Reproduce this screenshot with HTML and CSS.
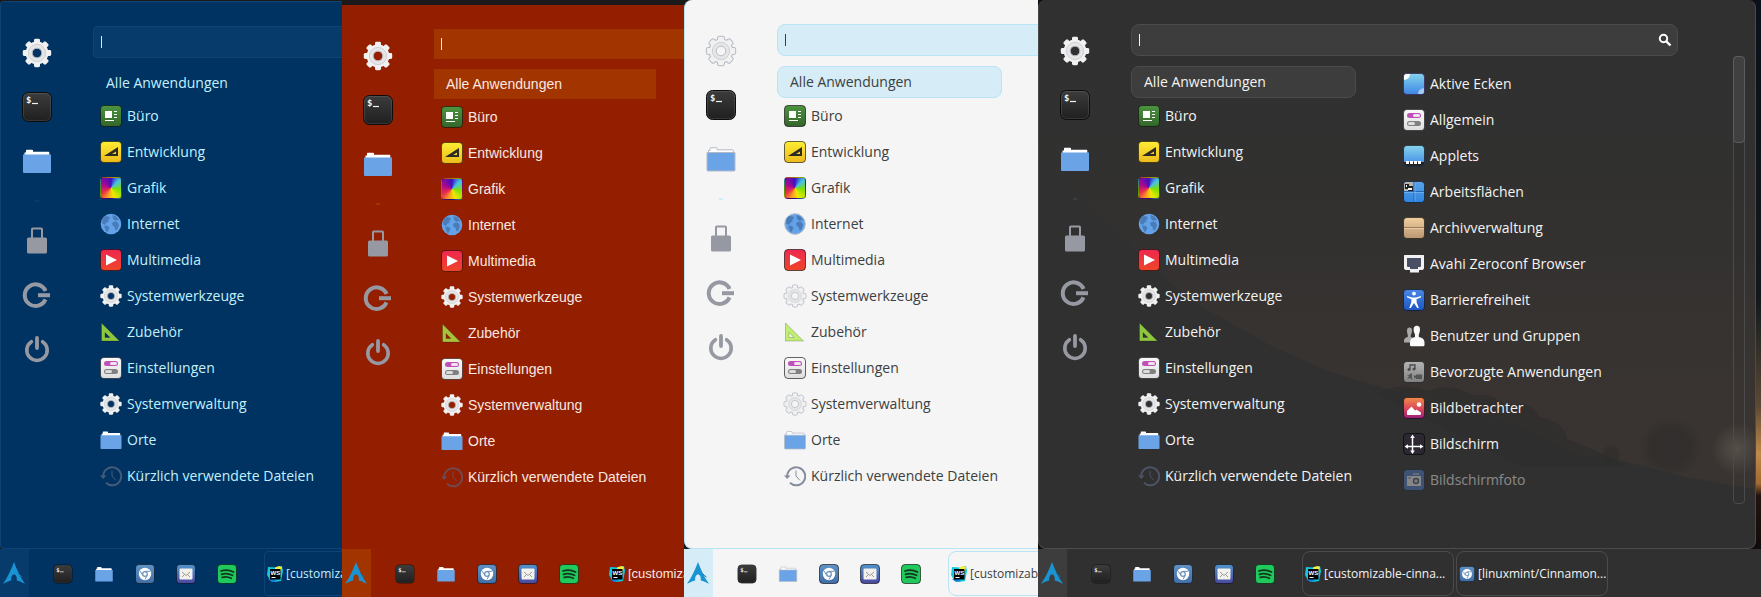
FILE: index.html
```html
<!DOCTYPE html>
<html lang="de">
<head>
<meta charset="utf-8">
<title>Anwendungsmenü – Themen</title>
<link rel="stylesheet" href="styles.css">
</head>
<body>
<svg class="gradients" aria-hidden="true">
  <defs>
    <linearGradient id="g-green" x2="0" y2="1"><stop stop-color="#4d9440"/><stop offset="1" stop-color="#33652a"/></linearGradient>
    <linearGradient id="g-yellow" x2="0" y2="1"><stop stop-color="#fdee34"/><stop offset="1" stop-color="#ecba1c"/></linearGradient>
    <linearGradient id="g-red" x2="0" y2="1"><stop stop-color="#ee2850"/><stop offset="1" stop-color="#ee4528"/></linearGradient>
    <linearGradient id="g-dark" x2="0" y2="1"><stop stop-color="#3c3c3c"/><stop offset="1" stop-color="#1f1f1f"/></linearGradient>
    <linearGradient id="g-white" x2="0" y2="1"><stop stop-color="#fafafa"/><stop offset="1" stop-color="#dedede"/></linearGradient>
    <linearGradient id="g-sky" x2="0" y2="1"><stop stop-color="#86d4ee"/><stop offset="1" stop-color="#3c86e4"/></linearGradient>
    <linearGradient id="g-blue" x2="0" y2="1"><stop stop-color="#5aa5e8"/><stop offset="1" stop-color="#2f84e2"/></linearGradient>
    <linearGradient id="g-tan" x2="0" y2="1"><stop stop-color="#f2cf9e"/><stop offset="1" stop-color="#b99773"/></linearGradient>
    <linearGradient id="g-access" x2="0" y2="1"><stop stop-color="#4b86e6"/><stop offset="1" stop-color="#1c57c4"/></linearGradient>
    <linearGradient id="g-grey" x2="0" y2="1"><stop stop-color="#b5b5b5"/><stop offset="1" stop-color="#808080"/></linearGradient>
    <linearGradient id="g-sunset" x2="0" y2="1"><stop stop-color="#f28b4c"/><stop offset=".55" stop-color="#d9455a"/><stop offset="1" stop-color="#96207c"/></linearGradient>
    <linearGradient id="g-steel" x2="0" y2="1"><stop stop-color="#6093c6"/><stop offset="1" stop-color="#3f6ea6"/></linearGradient>
    <linearGradient id="g-mail" x2="0" y2="1"><stop stop-color="#5094cc"/><stop offset="1" stop-color="#4a48a0"/></linearGradient>
    <linearGradient id="g-haze" x2="0" y2="1"><stop stop-color="#5a4234" stop-opacity="0"/><stop offset=".4" stop-color="#5a4234" stop-opacity=".04"/><stop offset=".85" stop-color="#5a4234" stop-opacity=".22"/></linearGradient>
    <radialGradient id="g-sun"><stop stop-color="#8a8478" stop-opacity=".35"/><stop offset="1" stop-color="#8a8478" stop-opacity="0"/></radialGradient>
    <radialGradient id="g-tree"><stop offset=".6" stop-color="#2c2b2a" stop-opacity=".6"/><stop offset="1" stop-color="#2c2b2a" stop-opacity="0"/></radialGradient>
  </defs>
</svg>
<svg class="symbols" aria-hidden="true">
  <defs>
    <g id="gear-shape">
      <circle cx="16" cy="16" r="11.4"/>
      <rect x="13" y="1.8" width="6" height="28.4" rx="1.4"/>
      <rect x="13" y="1.8" width="6" height="28.4" rx="1.4" transform="rotate(45 16 16)"/>
      <rect x="13" y="1.8" width="6" height="28.4" rx="1.4" transform="rotate(90 16 16)"/>
      <rect x="13" y="1.8" width="6" height="28.4" rx="1.4" transform="rotate(135 16 16)"/>
    </g>
  </defs>
  <symbol id="gear" viewBox="0 0 32 32">
    <use href="#gear-shape" class="gear-edge"/>
    <use href="#gear-shape" fill="#f1f1f2"/>
    <circle cx="16" cy="16" r="8.6" fill="#e6e6e7" stroke="#cdd0d4"/>
    <circle cx="16" cy="16" r="4.8" class="gear-hole"/>
  </symbol>
  <symbol id="terminal" viewBox="0 0 32 32">
    <rect x="1.5" y="1.5" width="29" height="29" rx="6" fill="url(#g-dark)" stroke="#0c0c0c"/>
    <rect x="2.5" y="2.5" width="27" height="27" rx="5" fill="none" stroke="#fff" stroke-opacity=".1"/>
    <text x="5" y="12" class="prompt">$</text>
    <path d="M11 12.5h6" stroke="#f2f2f2" stroke-width="1.2"/>
  </symbol>
  <symbol id="folder" viewBox="0 0 32 32">
    <path d="M3.500 12V7.500h1.500V5.500q0-.8.8-.8h5.400q.8 0 .8.8v1.300h15.500q.8 0 .8.8V12z" fill="#fff" class="edge"/>
    <path d="M2 9.500h28v17.500q0 1-1 1H3q-1 0-1-1z" fill="#6aa3e6" class="edge"/>
  </symbol>
  <symbol id="lock" viewBox="0 0 32 32">
    <path d="M11 13V4.300q0-.8.8-.8h8.400q.8 0 .8.8V13" fill="none" stroke="#9699a2" stroke-width="2"/>
    <rect x="6" y="12.500" width="20" height="16" rx="1.500" fill="#9699a2"/>
  </symbol>
  <symbol id="logout" viewBox="0 0 32 32">
    <path d="M24.500 12A10.800 10.800 0 1 0 24.500 20.400" fill="none" stroke="#9699a2" stroke-width="4"/>
    <path d="M17 16.200h12" stroke="#9699a2" stroke-width="4"/>
  </symbol>
  <symbol id="power" viewBox="0 0 32 32">
    <path d="M10.400 8.700A10.200 10.200 0 1 0 21.600 8.700" fill="none" stroke="#9699a2" stroke-width="3.600" stroke-linecap="round"/>
    <path d="M16 5v10" stroke="#9699a2" stroke-width="3.800" stroke-linecap="round"/>
  </symbol>
  <symbol id="office" viewBox="0 0 22 22">
    <rect x=".5" y=".5" width="21" height="21" rx="3.500" fill="url(#g-green)" class="rim"/>
    <path d="M5 6h7v7H5zM14 6h3v1h-3zM14 9h3v1h-3zM14 12h3v1h-3zM5 15h9v1H5z" fill="#fff"/>
  </symbol>
  <symbol id="dev" viewBox="0 0 22 22">
    <rect x=".5" y=".5" width="21" height="21" rx="3.500" fill="url(#g-yellow)" class="rim"/>
    <path fill-rule="evenodd" d="M4 15 18 6v9zM12 13h4v-2.600z" fill="#2c2a25"/>
  </symbol>
  <symbol id="globe" viewBox="0 0 22 22">
    <circle cx="11" cy="11" r="10.300" fill="#63a2e8" class="edge"/>
    <path d="M2.500 5.500 5 3l4 .5 1 2L8 7l1 1.500-2.500 1L5 12l-3-1.500zM4 13l3-.5 2.500 2-1 2.500L7 19.500 5.500 17zM12.500 2l4 1.500 3 4-2-.5-2 1-2.500-2zM12 10l2.500-1.500 3 .5 1.500 3-1.500 4.500-2 1-1-3.500-2-1.500z" fill="#4a7db8"/>
  </symbol>
  <symbol id="media" viewBox="0 0 22 22">
    <rect x=".5" y=".5" width="21" height="21" rx="3.500" fill="url(#g-red)" class="rim"/>
    <path d="M6 5.500 17 11 6 16.500z" fill="#fff"/>
  </symbol>
  <symbol id="triangle" viewBox="0 0 22 22">
    <path fill-rule="evenodd" d="M1.500 2 19.500 20h-18zM5 11.500V16.500h5z" class="ruler"/>
  </symbol>
  <symbol id="settings" viewBox="0 0 22 22">
    <rect x=".5" y=".5" width="21" height="21" rx="3.500" fill="url(#g-white)" class="rim"/>
    <rect x="4" y="4" width="14" height="5" rx="2.500" fill="#bf50b8"/>
    <rect x="10" y="5" width="7" height="3" rx="1.500" fill="#f2e2f0"/>
    <rect x="4" y="12" width="14" height="5" rx="2.500" fill="#808080"/>
    <rect x="5" y="13" width="7" height="3" rx="1.500" fill="#dcdcdc"/>
  </symbol>
  <symbol id="history" viewBox="0 0 22 22">
    <path d="M3.200 11A9 9 0 1 1 6 17.800" fill="none" class="hist"/>
    <path d="M0 10.500h6.400L3.200 14z" class="hist-tip"/>
    <path d="M12 5.500V11l3.800 4.300" fill="none" class="hist-hand"/>
  </symbol>
  <symbol id="corners" viewBox="0 0 22 22">
    <rect x=".5" y=".5" width="21" height="21" rx="3.500" fill="url(#g-sky)" stroke="#3a2258" stroke-opacity=".7"/>
    <path d="M1 7V3.500Q1 1 3.500 1H7Q7 6 1 7z" fill="#fff"/><path d="M21 15v3.500q0 2.500-2.500 2.500H15q0-5 6-6z" fill="#a7c8f4"/>
  </symbol>
  <symbol id="applets" viewBox="0 0 22 22">
    <rect x=".5" y=".5" width="21" height="21" rx="3.500" fill="url(#g-sky)" class="rim"/>
    <path d="M1 17h20v1.500q0 2.500-2.500 2.500h-15Q1 21 1 18.500z" fill="#222"/>
    <path d="M3 16h3v3H3zM7 16h3v3H7zM11 16h3v3h-3zM15 16h3v3h-3z" fill="#fff"/>
  </symbol>
  <symbol id="desks" viewBox="0 0 22 22">
    <rect x=".5" y=".5" width="21" height="21" rx="3.500" fill="url(#g-blue)" class="rim"/>
    <path d="M1 10V3.500Q1 1 3.500 1H10v9z" fill="#b4b4b4"/>
    <path d="M11 1v20M1 10.500h20" stroke="#2467b4" stroke-width="1"/>
    <path d="M12 1.500v19M1 11.500h20" stroke="#86bdf0" stroke-width=".6"/>
    <path d="M2 3h4v5H2zM5 5h5v5H5z" fill="#202020"/><path d="M5 7h4v2H5zM3 4h1v2H3z" fill="#fff"/>
  </symbol>
  <symbol id="archive" viewBox="0 0 22 22">
    <rect x=".5" y=".5" width="21" height="21" rx="3.500" fill="url(#g-tan)" class="rim"/>
    <path d="M1 10.500h20" stroke="#9c7a58"/><path d="M1 11.500h20" stroke="#e6cba6"/>
  </symbol>
  <symbol id="avahi" viewBox="0 0 22 22">
    <path d="M1.500 2h19q.5 0 .5.500V15q0 2-2 2h-3v2.500h-9V17H3q-2 0-2-2V2.500Q1 2 1.500 2z" fill="#f2f2f4"/>
    <path d="M4 5h14v8q0 1-1 1h-2v2H7v-2H5q-1 0-1-1z" fill="#4a4f66"/>
  </symbol>
  <symbol id="access" viewBox="0 0 22 22">
    <rect x=".5" y=".5" width="21" height="21" rx="3.500" fill="url(#g-access)" class="rim"/>
    <circle cx="11" cy="4.600" r="1.900" fill="#fff"/>
    <path d="M4 7l5 1.500h4L18 7v1.200l-4.500 2 .2 3.300L15.800 19h-1.500L11 14l-3.300 5H6.200l2.100-5.500.2-3.300-4.500-2z" fill="#fff"/>
  </symbol>
  <symbol id="users" viewBox="0 0 22 22">
    <path d="M6.500 2.500q2.500 0 2.500 3T7.800 10v2q3 .8 3 4v1.500H1V16q0-3.500 3.800-4v-2Q4 8.500 4 5.500t2.500-3z" fill="#a9a9a9"/>
    <path d="M13.800.8q3.200 0 3.200 3.700 0 3.200-1.200 5V12q5.700.8 5.700 5.500V20q0 1.200-1.300 1.200H8.300Q7 21.200 7 20v-2.500Q7 12.800 12 12V9.500Q10.600 7.700 10.600 4.500q0-3.700 3.200-3.700z" fill="#fafafa"/>
  </symbol>
  <symbol id="preferred" viewBox="0 0 22 22">
    <rect x=".5" y=".5" width="21" height="21" rx="3.500" fill="url(#g-grey)" class="rim"/>
    <path d="M7 8.500V4h5v4" fill="none" stroke="#4c4c4c" stroke-width="1.300"/><circle cx="6" cy="8.500" r="1.500" fill="#4c4c4c"/><circle cx="11" cy="8" r="1.500" fill="#4c4c4c"/>
    <path d="M9 12v7l-2-2-3 1 2-3H4zM11 14l2 1v-1.500h6v4.500h-6v-1.500l-2 1z" fill="#555"/>
  </symbol>
  <symbol id="images" viewBox="0 0 22 22">
    <rect x=".5" y=".5" width="21" height="21" rx="3.500" fill="url(#g-sunset)" class="rim"/>
    <circle cx="16" cy="7.500" r="2.300" fill="#fff"/><path d="M4 17.500V14l4.500-4.500 3.500 4 1.500-1 4.500 3v1q0 1.500-1.500 1.500h-11Q4 18 4 17.500z" fill="#fff"/>
  </symbol>
  <symbol id="display" viewBox="0 0 22 22">
    <rect x=".5" y=".5" width="21" height="21" rx="3.500" fill="#2d2734" stroke="#111"/>
    <path d="M9.500 4v14M4 13.500h14" stroke="#fff" stroke-width="1.500"/>
    <path d="M9.500 1.500 11.800 5H7.200zM9.500 21l2.300-3.500H7.200zM1.500 13.500 5 11.200v4.600zM20.500 13.500 17 11.200v4.600z" fill="#fff"/>
  </symbol>
  <symbol id="camera" viewBox="0 0 22 22">
    <rect x=".5" y=".5" width="21" height="21" rx="3.500" fill="#4f7cc8" class="rim"/>
    <path d="M10 4.500h6v1h-6zM4 7h14v10H4z" fill="#eee"/><circle cx="13" cy="12" r="3.200" fill="#4a566a"/><circle cx="13" cy="12" r="1.700" fill="#ddd"/><path d="M5.500 8.500h2v1h-2z" fill="#4a566a"/>
  </symbol>
  <symbol id="arch" viewBox="0 0 22 22">
    <path d="M11 0C8.500 6.500 5 15 0 21.800c3.300-1.600 5.500-2.700 8.200-3.300-.3-3.500.8-6 2.800-6s3.100 2.500 2.800 6c2.700.6 4.900 1.700 8.200 3.300C17 15 13.500 6.500 11 0z" fill="#1a93d2"/>
    <path d="M15.500 11.500q1.500 2 4 3.500" stroke="#0f6fa6" fill="none"/>
  </symbol>
  <symbol id="chromium" viewBox="0 0 20 20">
    <rect x=".5" y=".5" width="19" height="19" rx="3.500" fill="url(#g-steel)" class="rim"/>
    <circle cx="10" cy="10" r="6.200" fill="#fff"/><circle cx="10" cy="10" r="2.300" fill="none" stroke="#6a90ba" stroke-width="1.200"/>
    <path d="M10 7.300h5M7.700 11.300 5.300 7.200M12.300 11.300 10 15.500" stroke="#6a90ba" fill="none"/>
  </symbol>
  <symbol id="mail" viewBox="0 0 20 20">
    <rect x=".5" y=".5" width="19" height="19" rx="3.500" fill="url(#g-mail)" class="rim"/>
    <rect x="3.500" y="4.500" width="13" height="11" rx="1" fill="#f3f1ec"/>
    <path d="M6 8l4 3.500L14 8M6 13l2.600-2.600M14 13l-2.600-2.600" stroke="#9c9c98" fill="none"/>
  </symbol>
  <symbol id="spotify" viewBox="0 0 20 20">
    <rect x=".5" y=".5" width="19" height="19" rx="3.500" fill="#1fc95b" class="rim"/>
    <path d="M4 7q6.500-2 12.500 1M4.500 10.300q5.500-1.700 11 1M5.200 13.300q4.800-1.300 9 1" stroke="#14361f" stroke-width="1.800" fill="none" stroke-linecap="round"/>
  </symbol>
  <symbol id="webstorm" viewBox="0 0 16 16">
    <path d="M1 1l8 .5L15 0l1 5-2 10-6 1-5-2L0 9z" fill="#12c9dc"/><path d="M8 1.500 12 0l3 1-1 4H8z" fill="#f2ee3c"/><path d="M1 13l4 3 5-1-4-3z" fill="#147fe0"/>
    <rect x="3" y="3" width="10.500" height="10.500" fill="#000"/><text x="3.500" y="9" class="ws">WS</text><path d="M4.500 11.500h4" stroke="#fff"/>
  </symbol>
  <symbol id="search" viewBox="0 0 14 14">
    <circle cx="5.500" cy="5.500" r="3.700" fill="none" stroke="#fff" stroke-width="2"/><path d="M8.300 8.300 12.500 12.500" stroke="#fff" stroke-width="2.400"/>
  </symbol>
</svg>

<main class="themes">
  <section class="panel blue">
    <div class="menu">
      <nav class="sidebar">
        <button aria-label="Systemeinstellungen"><svg><use href="#gear"/></svg></button>
        <button aria-label="Terminal"><svg><use href="#terminal"/></svg></button>
        <button aria-label="Dateien"><svg><use href="#folder"/></svg></button>
        <hr>
        <button aria-label="Sperren"><svg><use href="#lock"/></svg></button>
        <button aria-label="Abmelden"><svg><use href="#logout"/></svg></button>
        <button aria-label="Ausschalten"><svg><use href="#power"/></svg></button>
      </nav>
      <div class="content">
        <label class="search"><span class="caret"></span><input type="text" aria-label="Suche"></label>
        <div class="lists">
          <div class="categories">
            <button class="all">Alle Anwendungen</button>
            <button><svg><use href="#office"/></svg>Büro</button>
            <button><svg><use href="#dev"/></svg>Entwicklung</button>
            <button><span class="wheel"></span>Grafik</button>
            <button><svg><use href="#globe"/></svg>Internet</button>
            <button><svg><use href="#media"/></svg>Multimedia</button>
            <button><svg class="wide"><use href="#gear"/></svg>Systemwerkzeuge</button>
            <button><svg><use href="#triangle"/></svg>Zubehör</button>
            <button><svg><use href="#settings"/></svg>Einstellungen</button>
            <button><svg class="wide"><use href="#gear"/></svg>Systemverwaltung</button>
            <button><svg class="wide"><use href="#folder"/></svg>Orte</button>
            <button><svg><use href="#history"/></svg>Kürzlich verwendete Dateien</button>
          </div>
        </div>
      </div>
    </div>
    <footer class="taskbar">
      <button class="start" aria-label="Menü"><svg><use href="#arch"/></svg></button>
      <div class="launchers">
        <button aria-label="Terminal"><svg><use href="#terminal"/></svg></button>
        <button aria-label="Dateien"><svg><use href="#folder"/></svg></button>
        <button aria-label="Chromium"><svg><use href="#chromium"/></svg></button>
        <button aria-label="E-Mail"><svg><use href="#mail"/></svg></button>
        <button aria-label="Spotify"><svg><use href="#spotify"/></svg></button>
      </div>
      <div class="windows"><button><svg><use href="#webstorm"/></svg><span>[customizable-cinna...</span></button></div>
    </footer>
  </section>

  <section class="panel red">
    <div class="menu">
      <nav class="sidebar">
        <button aria-label="Systemeinstellungen"><svg><use href="#gear"/></svg></button>
        <button aria-label="Terminal"><svg><use href="#terminal"/></svg></button>
        <button aria-label="Dateien"><svg><use href="#folder"/></svg></button>
        <hr>
        <button aria-label="Sperren"><svg><use href="#lock"/></svg></button>
        <button aria-label="Abmelden"><svg><use href="#logout"/></svg></button>
        <button aria-label="Ausschalten"><svg><use href="#power"/></svg></button>
      </nav>
      <div class="content">
        <label class="search"><span class="caret"></span><input type="text" aria-label="Suche"></label>
        <div class="lists">
          <div class="categories">
            <button class="all">Alle Anwendungen</button>
            <button><svg><use href="#office"/></svg>Büro</button>
            <button><svg><use href="#dev"/></svg>Entwicklung</button>
            <button><span class="wheel"></span>Grafik</button>
            <button><svg><use href="#globe"/></svg>Internet</button>
            <button><svg><use href="#media"/></svg>Multimedia</button>
            <button><svg class="wide"><use href="#gear"/></svg>Systemwerkzeuge</button>
            <button><svg><use href="#triangle"/></svg>Zubehör</button>
            <button><svg><use href="#settings"/></svg>Einstellungen</button>
            <button><svg class="wide"><use href="#gear"/></svg>Systemverwaltung</button>
            <button><svg class="wide"><use href="#folder"/></svg>Orte</button>
            <button><svg><use href="#history"/></svg>Kürzlich verwendete Dateien</button>
          </div>
        </div>
      </div>
    </div>
    <footer class="taskbar">
      <button class="start" aria-label="Menü"><svg><use href="#arch"/></svg></button>
      <div class="launchers">
        <button aria-label="Terminal"><svg><use href="#terminal"/></svg></button>
        <button aria-label="Dateien"><svg><use href="#folder"/></svg></button>
        <button aria-label="Chromium"><svg><use href="#chromium"/></svg></button>
        <button aria-label="E-Mail"><svg><use href="#mail"/></svg></button>
        <button aria-label="Spotify"><svg><use href="#spotify"/></svg></button>
      </div>
      <div class="windows"><button><svg><use href="#webstorm"/></svg><span>[customizable-cinna...</span></button></div>
    </footer>
  </section>

  <section class="panel light">
    <div class="menu">
      <nav class="sidebar">
        <button aria-label="Systemeinstellungen"><svg><use href="#gear"/></svg></button>
        <button aria-label="Terminal"><svg><use href="#terminal"/></svg></button>
        <button aria-label="Dateien"><svg><use href="#folder"/></svg></button>
        <hr>
        <button aria-label="Sperren"><svg><use href="#lock"/></svg></button>
        <button aria-label="Abmelden"><svg><use href="#logout"/></svg></button>
        <button aria-label="Ausschalten"><svg><use href="#power"/></svg></button>
      </nav>
      <div class="content">
        <label class="search"><span class="caret"></span><input type="text" aria-label="Suche"></label>
        <div class="lists">
          <div class="categories">
            <button class="all">Alle Anwendungen</button>
            <button><svg><use href="#office"/></svg>Büro</button>
            <button><svg><use href="#dev"/></svg>Entwicklung</button>
            <button><span class="wheel"></span>Grafik</button>
            <button><svg><use href="#globe"/></svg>Internet</button>
            <button><svg><use href="#media"/></svg>Multimedia</button>
            <button><svg class="wide"><use href="#gear"/></svg>Systemwerkzeuge</button>
            <button><svg><use href="#triangle"/></svg>Zubehör</button>
            <button><svg><use href="#settings"/></svg>Einstellungen</button>
            <button><svg class="wide"><use href="#gear"/></svg>Systemverwaltung</button>
            <button><svg class="wide"><use href="#folder"/></svg>Orte</button>
            <button><svg><use href="#history"/></svg>Kürzlich verwendete Dateien</button>
          </div>
        </div>
      </div>
    </div>
    <footer class="taskbar">
      <button class="start" aria-label="Menü"><svg><use href="#arch"/></svg></button>
      <div class="launchers">
        <button aria-label="Terminal"><svg><use href="#terminal"/></svg></button>
        <button aria-label="Dateien"><svg><use href="#folder"/></svg></button>
        <button aria-label="Chromium"><svg><use href="#chromium"/></svg></button>
        <button aria-label="E-Mail"><svg><use href="#mail"/></svg></button>
        <button aria-label="Spotify"><svg><use href="#spotify"/></svg></button>
      </div>
      <div class="windows"><button><svg><use href="#webstorm"/></svg><span>[customizable-cinna...</span></button></div>
    </footer>
  </section>

  <section class="panel dark">
    <div class="menu">
      <svg class="scenery" viewBox="0 0 718 549" preserveAspectRatio="none" aria-hidden="true">
        <path d="M0 60 718 0V490L650 478 590 463 540 455 480 425 420 410 350 390 290 372 230 345 150 300 70 225 0 165z" fill="url(#g-haze)"/>
        <path d="M340 395q20-14 50-3 22-10 44 4 20-4 34 10 24-6 34 12 24 4 28 22 30 12 60 26H480z" fill="#2e2e2e" fill-opacity=".7"/>
        <ellipse cx="633" cy="448" rx="32" ry="30" fill="url(#g-tree)"/>
        <ellipse cx="574" cy="455" rx="10" ry="11" fill="url(#g-tree)"/>
        <circle cx="700" cy="450" r="26" fill="url(#g-sun)"/>
      </svg>
      <nav class="sidebar">
        <button aria-label="Systemeinstellungen"><svg><use href="#gear"/></svg></button>
        <button aria-label="Terminal"><svg><use href="#terminal"/></svg></button>
        <button aria-label="Dateien"><svg><use href="#folder"/></svg></button>
        <hr>
        <button aria-label="Sperren"><svg><use href="#lock"/></svg></button>
        <button aria-label="Abmelden"><svg><use href="#logout"/></svg></button>
        <button aria-label="Ausschalten"><svg><use href="#power"/></svg></button>
      </nav>
      <div class="content">
        <label class="search"><span class="caret"></span><input type="text" aria-label="Suche"><svg><use href="#search"/></svg></label>
        <div class="lists">
          <div class="categories">
            <button class="all">Alle Anwendungen</button>
            <button><svg><use href="#office"/></svg>Büro</button>
            <button><svg><use href="#dev"/></svg>Entwicklung</button>
            <button><span class="wheel"></span>Grafik</button>
            <button><svg><use href="#globe"/></svg>Internet</button>
            <button><svg><use href="#media"/></svg>Multimedia</button>
            <button><svg class="wide"><use href="#gear"/></svg>Systemwerkzeuge</button>
            <button><svg><use href="#triangle"/></svg>Zubehör</button>
            <button><svg><use href="#settings"/></svg>Einstellungen</button>
            <button><svg class="wide"><use href="#gear"/></svg>Systemverwaltung</button>
            <button><svg class="wide"><use href="#folder"/></svg>Orte</button>
            <button><svg><use href="#history"/></svg>Kürzlich verwendete Dateien</button>
          </div>
          <div class="apps">
            <button><svg><use href="#corners"/></svg>Aktive Ecken</button>
            <button><svg><use href="#settings"/></svg>Allgemein</button>
            <button><svg><use href="#applets"/></svg>Applets</button>
            <button><svg><use href="#desks"/></svg>Arbeitsflächen</button>
            <button><svg><use href="#archive"/></svg>Archivverwaltung</button>
            <button><svg><use href="#avahi"/></svg>Avahi Zeroconf Browser</button>
            <button><svg><use href="#access"/></svg>Barrierefreiheit</button>
            <button><svg><use href="#users"/></svg>Benutzer und Gruppen</button>
            <button><svg><use href="#preferred"/></svg>Bevorzugte Anwendungen</button>
            <button><svg><use href="#images"/></svg>Bildbetrachter</button>
            <button><svg><use href="#display"/></svg>Bildschirm</button>
            <button class="fading"><svg><use href="#camera"/></svg>Bildschirmfoto</button>
          </div>
        </div>
      </div>
      <div class="scrollbar"><div class="thumb"></div></div>
    </div>
    <footer class="taskbar">
      <button class="start" aria-label="Menü"><svg><use href="#arch"/></svg></button>
      <div class="launchers">
        <button aria-label="Terminal"><svg><use href="#terminal"/></svg></button>
        <button aria-label="Dateien"><svg><use href="#folder"/></svg></button>
        <button aria-label="Chromium"><svg><use href="#chromium"/></svg></button>
        <button aria-label="E-Mail"><svg><use href="#mail"/></svg></button>
        <button aria-label="Spotify"><svg><use href="#spotify"/></svg></button>
      </div>
      <div class="windows">
        <button><svg><use href="#webstorm"/></svg><span>[customizable-cinna...</span></button>
        <button><svg><use href="#chromium"/></svg><span>[linuxmint/Cinnamon...</span></button>
      </div>
    </footer>
  </section>
</main>
</body>
</html>
```
FILE: styles.css
```css
* { box-sizing: border-box; }

body {
  margin: 0;
  background: #1c191b;
  font-family: "Open Sans", "Noto Sans", sans-serif;
  font-size: 14px;
  line-height: 18px;
}

button {
  margin: 0;
  padding: 0;
  border: 0;
  background: none;
  color: inherit;
  font: inherit;
}

.gradients {
  position: absolute;
  width: 0;
  height: 0;
}

.symbols { display: none; }

.themes {
  display: grid;
  grid-template-columns: 342fr 342fr 354fr 723fr;
  min-height: 100vh;
}

/* Themes */

.panel {
  --menu-top: 24px;
  --all-height: 32px;
  --radius: 8px;
  --outline: transparent;
  --rim: rgba(0, 0, 0, .5);
  --hole: var(--bg);
  --ruler: #8fc63f;
  --history: #465a78;
  display: flex;
  flex-direction: column;
  min-width: 0;
  overflow: hidden;
  color: var(--text);
}

.blue {
  --bg: #003262;
  --hi: #073b6b;
  --line: #0d4475;
  --text: #c2f1fb;
  --radius: 4px;
  --all-height: 30px;
  padding-top: 1px;
}

.red {
  --bg: #931e00;
  --hi: #a23400;
  --line: #931e00;
  --text: #f7e8e2;
  --radius: 0;
  --all-height: 30px;
  --ruler: #a9c23c;
  --history: #704a50;
  padding-top: 5px;
  font-family: "Liberation Sans", sans-serif;
}

.light {
  --bg: #f5f5f5;
  --hi: #d6ecf6;
  --line: #b8e4f6;
  --text: #3b4040;
  --outline: #b4bac6;
  --rim: rgba(0, 0, 0, .6);
  --ruler: #bfee70;
  --history: #858c9c;
}

.dark {
  --bg: #303030;
  --hi: #3d3d3d;
  --line: #4b4b4b;
  --text: #f4f4f2;
  --history: #4c5362;
  background: linear-gradient(#0b1118 0%, #12181d 50%, #5a4a34 68%, #c08a4a 76%, #a06a34 81%, #21140f 83%, #100c0b 92%);
}

/* Menu */

.menu {
  position: relative;
  display: flex;
  flex: 1;
  padding-top: var(--menu-top);
  border: 1px solid var(--line);
  border-right: 0;
  border-radius: var(--radius) 0 0 var(--radius);
  background: var(--bg);
}

.red .menu { border: 0; }
.light .menu { border-top: 0; }

.dark .menu {
  margin-right: 5px;
  border-top: 0;
  border-right: 1px solid var(--line);
  border-radius: var(--radius);
}

.scenery {
  position: absolute;
  inset: 0;
  width: 100%;
  height: 100%;
}

.sidebar,
.content,
.scrollbar { position: relative; }

.sidebar {
  display: flex;
  flex: none;
  flex-direction: column;
  width: 72px;
  margin-right: 20px;
}

.sidebar button {
  display: grid;
  place-items: center;
  height: 54px;
}

.sidebar svg { width: 32px; height: 32px; }

.sidebar hr {
  width: 4px;
  height: 2px;
  margin: 12px auto;
  border: 0;
  background: var(--hi);
}

.content {
  display: flex;
  flex: 1 0 547px;
  flex-direction: column;
  gap: 10px;
}

.search {
  display: flex;
  align-items: center;
  height: 32px;
  padding: 0 5px 0 7px;
  border: 1px solid var(--line);
  border-radius: var(--radius);
  background: var(--hi);
}

.red .search { height: 30px; border: 0; }

.caret {
  flex: none;
  width: 1px;
  height: 12px;
  background: var(--text);
}

.search input {
  flex: 1;
  min-width: 0;
  padding: 0;
  border: 0;
  outline: 0;
  background: none;
  color: inherit;
  font: inherit;
}

.search svg { width: 14px; height: 14px; }

.lists {
  display: flex;
  gap: 40px;
}

.categories,
.apps {
  display: flex;
  flex-direction: column;
  width: 225px;
}

.red .categories { width: 222px; }
.apps { flex: 1; }

.lists button {
  display: flex;
  align-items: center;
  gap: 5px;
  height: 36px;
  padding-left: 7px;
  white-space: nowrap;
  text-align: left;
}

.lists button svg {
  flex: none;
  width: 22px;
  height: 22px;
}

.lists button .wide {
  width: 24px;
  height: 24px;
  margin: 0 -1px;
}

.lists .all {
  height: var(--all-height);
  padding-left: 12px;
  border: 1px solid var(--line);
  border-radius: var(--radius);
  background: var(--hi);
}

.blue .all { border-color: transparent; background: none; }
.red .all { border: 0; }
.lists .fading { opacity: .45; }

.scrollbar {
  flex: none;
  width: 12px;
  margin: 32px 10px 44px 55px;
  border: 1px solid var(--line);
  border-radius: 4px;
}

.thumb {
  height: 87px;
  margin: -1px;
  border: 1px solid #5c5c5c;
  border-radius: 4px;
  background: #404040;
}

/* Taskbar */

.taskbar {
  display: flex;
  height: 48px;
  background: var(--bg);
}

.start {
  display: grid;
  flex: none;
  place-items: center;
  width: 29px;
  padding-right: 1px;
  background: var(--hi);
}

.start svg { width: 22px; height: 22px; }

.launchers {
  display: flex;
  flex: none;
  gap: 21px;
  align-items: center;
  padding: 2px 27px 0 24px;
}

.launchers svg {
  display: block;
  width: 20px;
  height: 20px;
}

.windows {
  display: flex;
  flex: none;
  gap: 2px;
  padding: 2px 0 1px;
}

.windows button {
  display: flex;
  align-items: center;
  gap: 3px;
  width: 152px;
  padding-left: 2px;
  border: 1px solid var(--line);
  border-radius: var(--radius);
  font-size: 12px;
  white-space: nowrap;
}

.red .windows button { font-size: 13px; }
.windows svg { flex: none; width: 16px; height: 16px; }

/* Icon parts */

.gear-edge { fill: var(--outline); stroke: var(--outline); stroke-width: 2; }
.gear-hole { fill: var(--hole); stroke: #b8bcc4; }
.edge { stroke: var(--outline); stroke-width: 1; }
.rim { stroke: var(--rim); }
.ruler { fill: var(--ruler); stroke: rgba(0, 0, 0, .2); stroke-width: 1; }
.hist { stroke: var(--history); stroke-width: 2; }
.hist-tip { fill: var(--history); }
.hist-hand { stroke: var(--history); stroke-width: 1; }
.prompt { fill: #f2f2f2; font: bold 9px "DejaVu Sans Mono", monospace; }
.ws { fill: #fff; font: bold 6px "Liberation Sans", sans-serif; }

.wheel {
  width: 22px;
  height: 22px;
  border: 1px solid rgba(0, 0, 0, .35);
  border-radius: 4px;
  background: conic-gradient(#3a10c0, #45c0e8 45deg, #80e000 100deg, #f0e800 160deg, #f8a020 200deg, #e83048 240deg, #b0088c 290deg, #3a10c0);
}
```
